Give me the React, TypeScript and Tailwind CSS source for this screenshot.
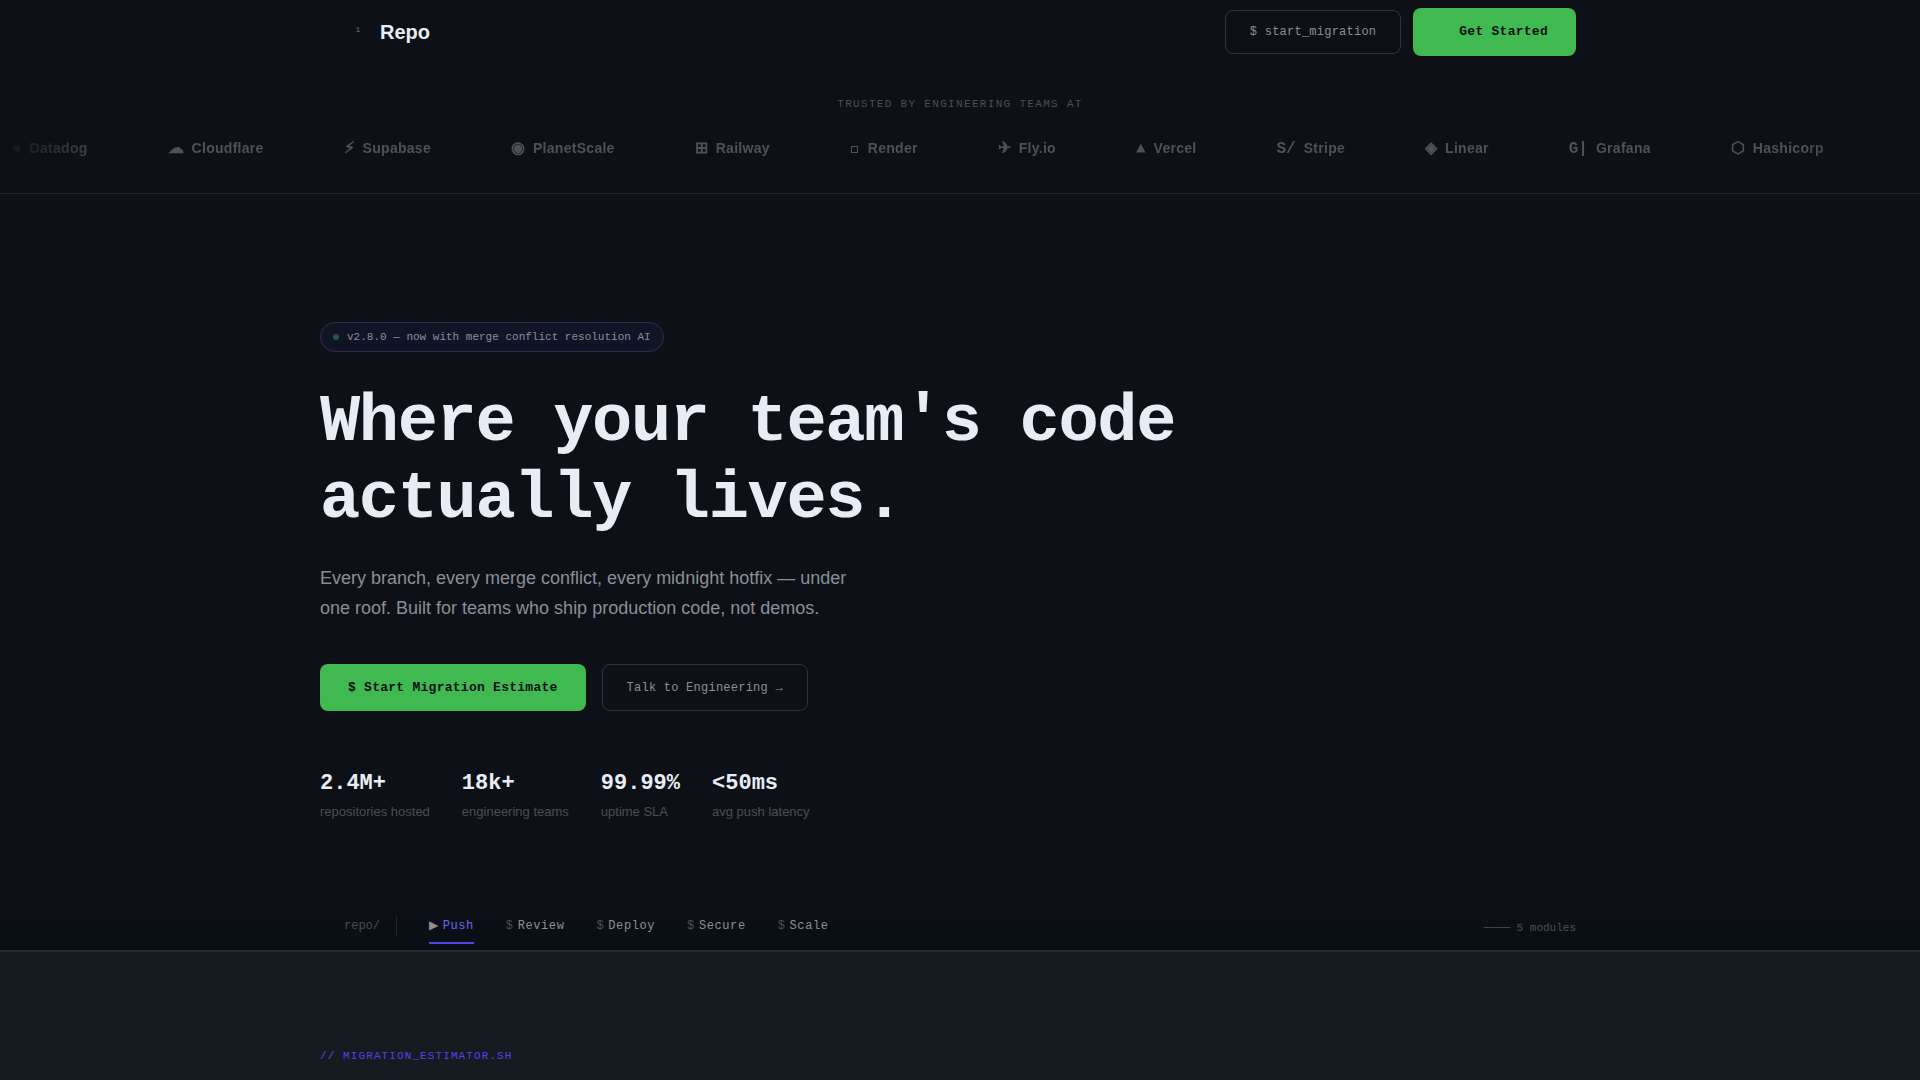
const MONO = "font-['Liberation_Mono']";

function SmallSquare() {
  return (
    <svg width="10" height="7" viewBox="0 0 10 7" fill="none" stroke="currentColor" className="inline align-baseline">
      <rect x="1.5" y="0.5" width="6" height="6" />
    </svg>
  );
}

const logos = [
  { icon: '●', name: 'Datadog' },
  { icon: '☁', name: 'Cloudflare' },
  { icon: '⚡\uFE0E', name: 'Supabase' },
  { icon: '◉', name: 'PlanetScale' },
  { icon: '⊞', name: 'Railway' },
  { icon: <SmallSquare />, name: 'Render' },
  { icon: '✈', name: 'Fly.io' },
  { icon: '▲', name: 'Vercel' },
  { icon: 'S/', name: 'Stripe' },
  { icon: '◈', name: 'Linear' },
  { icon: 'G|', name: 'Grafana' },
  { icon: '⬡', name: 'Hashicorp' },
];

const stats = [
  { value: '2.4M+', label: 'repositories hosted' },
  { value: '18k+', label: 'engineering teams' },
  { value: '99.99%', label: 'uptime SLA' },
  { value: '<50ms', label: 'avg push latency' },
];

const modules = ['Push', 'Review', 'Deploy', 'Secure', 'Scale'];

function Header() {
  return (
    <header className="mx-auto flex h-16 w-full max-w-7xl items-center justify-between px-6">
      <a href="#" className="flex items-center gap-2 text-xl font-bold text-[#e8ecf4]">
        <span className={`flex size-7 items-center justify-center pb-1 text-[8px] font-normal text-[#6e7178] ${MONO}`}>
          1
        </span>
        Repo
      </a>
      <div className={`flex items-center gap-3 ${MONO}`}>
        <button className="h-11 rounded-lg border border-[#30333b] px-6 text-xs tracking-[0.02em] text-[#8b8e95]">
          $ start_migration
        </button>
        <button className="h-12 rounded-lg bg-[#3fb950] pr-7 pl-[46px] text-[13px] font-bold tracking-[0.02em] text-[#0d1117]">
          Get Started
        </button>
      </div>
    </header>
  );
}

function TrustedBy() {
  return (
    <section className="border-b border-[#21262d] pt-8 pb-[33px]">
      <p className={`mb-[23px] text-center text-[11px] leading-[17px] tracking-[0.12em] text-[#4b4e55] ${MONO}`}>
        TRUSTED BY ENGINEERING TEAMS AT
      </p>
      <ul className="flex h-6 items-center gap-20 overflow-hidden pl-3 [mask-image:linear-gradient(to_right,transparent,black_120px,black_calc(100%-120px),transparent)]">
        {logos.map((logo) => (
          <li
            key={logo.name}
            className="flex shrink-0 items-center gap-2 text-sm font-bold tracking-[0.02em] text-[#4e5157]"
          >
            <span className={`pt-0.5 text-base leading-6 tracking-normal ${MONO}`}>{logo.icon}</span>
            {logo.name}
          </li>
        ))}
      </ul>
    </section>
  );
}

function Hero() {
  return (
    <section className="bg-[radial-gradient(circle_at_0_2px,#10151c_0,#10151c_1px,transparent_2px)] bg-[size:60px_120px] pt-32 pb-20">
      <div className="mx-auto max-w-7xl">
        <p className={`flex h-[30px] w-fit items-center gap-2 rounded-full border border-[#2b2d40] bg-[#111326] px-3 text-[11px] text-[#8b8e95] ${MONO}`}>
          <span className="size-1.5 rounded-full bg-[#23593a]" />
          v2.8.0 — now with merge conflict resolution AI
        </p>
        <h1 className={`mt-8 text-[67px] leading-[77px] font-bold tracking-[-0.02em] text-[#e8ecf4] ${MONO}`}>
          Where your team's code
          <br />
          actually lives.
        </h1>
        <p className="mt-[25px] max-w-[560px] text-lg leading-[30px] text-[#8b8e95]">
          Every branch, every merge conflict, every midnight hotfix — under one roof. Built for teams who ship
          production code, not demos.
        </p>
        <div className={`mt-[41px] flex gap-4 ${MONO}`}>
          <button className="h-[47px] rounded-lg bg-[#3fb950] px-7 text-[13px] font-bold tracking-[0.02em] text-[#0d1117]">
            $ Start Migration Estimate
          </button>
          <button className="h-[47px] rounded-lg border border-[#30333b] px-6 text-xs tracking-[0.02em] text-[#8b8e95]">
            Talk to Engineering →
          </button>
        </div>
        <dl className="mt-14 flex gap-8">
          {stats.map((stat) => (
            <div key={stat.label} className="flex flex-col-reverse">
              <dt className="text-[13px] leading-[21px] text-[#4b4e55]">{stat.label}</dt>
              <dd className={`text-[22px] leading-[34px] font-bold text-[#e8ecf4] ${MONO}`}>{stat.value}</dd>
            </div>
          ))}
        </dl>
      </div>
    </section>
  );
}

function ModuleNav() {
  return (
    <nav className={`border-b-2 border-[#262b33] bg-linear-to-b from-[#0d1117] to-[#090d14] ${MONO}`}>
      <div className="mx-auto flex h-12 max-w-7xl items-center px-6">
        <span className="text-xs text-[#4b4e55]">repo/</span>
        <span className="ml-4 h-5 w-px bg-[#21262d]" />
        <ul className="ml-8 flex gap-8 self-stretch text-xs tracking-[0.05em]">
          {modules.map((name, index) => (
            <li key={name} className="flex">
              <a
                href={`#${name.toLowerCase()}`}
                className={
                  index === 0
                    ? 'mb-1.5 flex items-center gap-1 border-b-2 border-[#4f46e5] pt-2 text-[#6e64f0]'
                    : 'mb-1.5 flex items-center gap-1 border-b-2 border-transparent pt-2 text-[#8b8e95]'
                }
              >
                <span className={index === 0 ? 'text-[#8b8e95]' : 'text-[#4b4e55]'}>{index === 0 ? '▶' : '$'}</span>
                {name}
              </a>
            </li>
          ))}
        </ul>
        <span className="ml-auto pt-1 text-[11px] text-[#4b4e55]">──── 5 modules</span>
      </div>
    </nav>
  );
}

export default function App() {
  return (
    <div className="flex min-h-screen flex-col bg-[#0d1117] font-['Liberation_Sans',sans-serif]">
      <Header />
      <TrustedBy />
      <Hero />
      <ModuleNav />
      <section className="grow bg-[#161b22] pt-24">
        <div className="mx-auto max-w-7xl">
          <h2 className={`text-[11px] leading-4 tracking-[0.1em] text-[#4f46e5] ${MONO}`}>// MIGRATION_ESTIMATOR.SH</h2>
        </div>
      </section>
    </div>
  );
}
